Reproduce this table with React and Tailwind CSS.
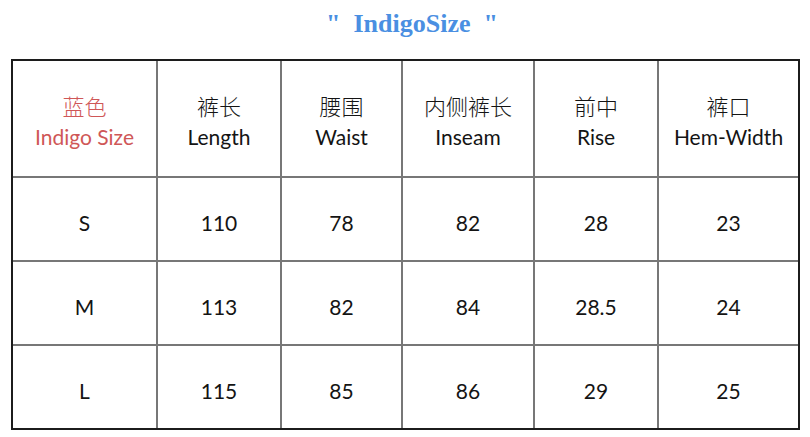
import React from 'react'

const headers = [
    { cn: '蓝色', en: 'Indigo Size', red: true },
    { cn: '裤长', en: 'Length' },
    { cn: '腰围', en: 'Waist' },
    { cn: '内侧裤长', en: 'Inseam' },
    { cn: '前中', en: 'Rise' },
    { cn: '裤口', en: 'Hem-Width' },
]

const rows = [
    ['S', '110', '78', '82', '28', '23'],
    ['M', '113', '82', '84', '28.5', '24'],
    ['L', '115', '85', '86', '29', '25'],
]

const rowHeights = ['h-[84px]', 'h-[84px]', 'h-[82px]']

export default function App() {
    return (
        <div className="w-[810px] h-[437px] bg-white overflow-hidden">
            {/* title */}
            <div className="h-[59px] pt-[6px] pl-[14px] text-center">
                <span className="whitespace-pre font-['Liberation_Serif',serif] font-bold text-[26px] leading-[36px] text-[#4a8fe2]">
                    {'"  IndigoSize  "'}
                </span>
            </div>

            {/* size table */}
            <div className="ml-[11px] w-[789px] border-2 border-[#1c1c1c] font-['Lato','Noto_Sans_CJK_SC',sans-serif] text-[#141414]">
                <div className="grid grid-cols-[145px_124px_121px_132px_124px_139px]">
                    {headers.map((h, i) => (
                        <div
                            key={h.en}
                            className={`h-[117px] border-b-2 border-[#777] flex flex-col items-center justify-center pt-[4px] ${
                                i < 5 ? 'border-r-2' : ''
                            } ${h.red ? 'text-[#cf5757]' : ''}`}
                        >
                            <span className="font-['Noto_Sans_CJK_SC',sans-serif] font-light text-[22px] leading-[32px]">
                                {h.cn}
                            </span>
                            <span className="text-[21px] leading-[32px]">{h.en}</span>
                        </div>
                    ))}
                </div>

                {rows.map((r, ri) => (
                    <div
                        key={r[0]}
                        className="grid grid-cols-[145px_124px_121px_132px_124px_139px]"
                    >
                        {r.map((v, i) => (
                            <div
                                key={i}
                                className={`${rowHeights[ri]} border-[#777] flex items-center justify-center text-[21px] pt-[7px] ${
                                    i < 5 ? 'border-r-2' : ''
                                } ${ri < 2 ? 'border-b-2' : ''}`}
                            >
                                {v}
                            </div>
                        ))}
                    </div>
                ))}
            </div>
        </div>
    )
}
